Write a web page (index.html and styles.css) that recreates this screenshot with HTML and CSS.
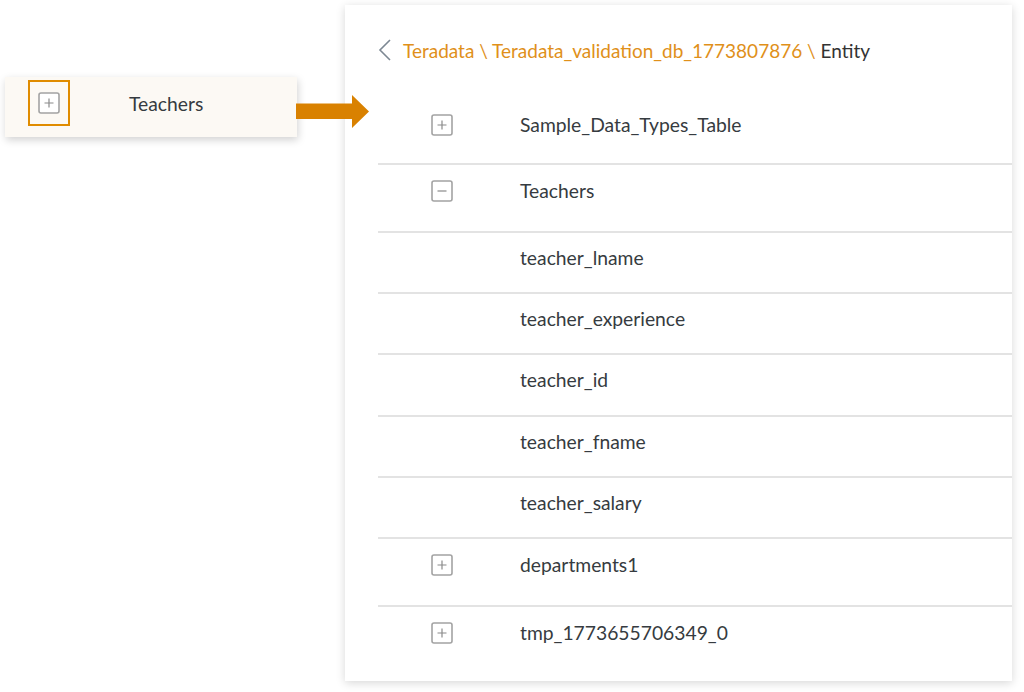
FILE: index.html
```html
<!DOCTYPE html>
<html>
<head>
<meta charset="utf-8">
<link rel="stylesheet" href="styles.css">
</head>
<body>
<div class="stage">
  <div class="card">
    <div class="focus">
      <svg class="tg" width="22" height="22" viewBox="0 0 22 22"><rect x="1" y="1" width="20" height="20" rx="2" fill="#fff" stroke="#a3a3a3" stroke-width="1.6"/><path d="M6.5 11h9M11 6.5v9" stroke="#8a8a8a" stroke-width="1.2"/></svg>
    </div>
    <span class="card-label">Teachers</span>
  </div>

  <div class="panel">
    <div class="crumbs">
      <svg class="back" width="14" height="22" viewBox="0 0 14 22"><path d="M12 1L2 11l10 10" fill="none" stroke="#7d8893" stroke-width="1.6"/></svg>
      <span class="link">Teradata \ Teradata_validation_db_1773807876 \ </span><span class="cur">Entity</span>
    </div>
    <div class="list">
      <div class="row node first">
        <svg class="tg" width="22" height="22" viewBox="0 0 22 22"><rect x="1" y="1" width="20" height="20" rx="2" fill="#fff" stroke="#a3a3a3" stroke-width="1.6"/><path d="M6.5 11h9M11 6.5v9" stroke="#8a8a8a" stroke-width="1.2"/></svg>
        <span class="label">Sample_Data_Types_Table</span>
      </div>
      <div class="row node">
        <svg class="tg" width="22" height="22" viewBox="0 0 22 22"><rect x="1" y="1" width="20" height="20" rx="2" fill="#fff" stroke="#a3a3a3" stroke-width="1.6"/><path d="M6.5 11h9" stroke="#8a8a8a" stroke-width="1.2"/></svg>
        <span class="label">Teachers</span>
      </div>
      <div class="row leaf"><span class="label">teacher_lname</span></div>
      <div class="row leaf"><span class="label">teacher_experience</span></div>
      <div class="row leaf"><span class="label">teacher_id</span></div>
      <div class="row leaf"><span class="label">teacher_fname</span></div>
      <div class="row leaf"><span class="label">teacher_salary</span></div>
      <div class="row node">
        <svg class="tg" width="22" height="22" viewBox="0 0 22 22"><rect x="1" y="1" width="20" height="20" rx="2" fill="#fff" stroke="#a3a3a3" stroke-width="1.6"/><path d="M6.5 11h9M11 6.5v9" stroke="#8a8a8a" stroke-width="1.2"/></svg>
        <span class="label">departments1</span>
      </div>
      <div class="row node last">
        <svg class="tg" width="22" height="22" viewBox="0 0 22 22"><rect x="1" y="1" width="20" height="20" rx="2" fill="#fff" stroke="#a3a3a3" stroke-width="1.6"/><path d="M6.5 11h9M11 6.5v9" stroke="#8a8a8a" stroke-width="1.2"/></svg>
        <span class="label">tmp_1773655706349_0</span>
      </div>
    </div>
  </div>

  <svg class="arrow" width="74" height="33" viewBox="0 0 74 33"><path d="M0 8.5h56V0l17 16.5L56 33v-9H0z" fill="#d98100"/></svg>
</div>
</body>
</html>
```
FILE: styles.css
```css
* { box-sizing: border-box; }
html, body { margin: 0; padding: 0; background: #fff; }
body {
  font-family: Lato, "Open Sans", "Liberation Sans", sans-serif;
  color: #363b40;
  width: 1024px;
  height: 692px;
  overflow: hidden;
}
.stage {
  position: relative;
  display: flex;
  align-items: flex-start;
  padding: 5px 0 0 5px;
}
.card {
  margin-top: 72px;
  width: 292px;
  height: 60px;
  background: #fcf9f4;
  box-shadow: 1px 3px 8px rgba(0,0,0,0.18);
  display: flex;
  align-items: center;
  padding-left: 23px;
}
.focus {
  width: 42px;
  height: 46px;
  border: 2px solid #e08c00;
  display: flex;
  align-items: center;
  justify-content: center;
  margin-top: -8px;
}
.card-label {
  margin-left: 59px;
  font-size: 19.3px;
  margin-top: -8px;
}
.panel {
  margin-left: 48px;
  width: 667px;
  height: 676px;
  background: #fff;
  box-shadow: 0 2px 9px rgba(0,0,0,0.16);
  padding: 33px 0 0 33px;
}
.crumbs {
  display: flex;
  align-items: center;
  height: 24px;
  font-size: 19px;
  margin-bottom: 37px;
}
.back { margin-right: 11px; }
.link { color: #e0901a; white-space: pre; }
.cur { color: #333; }
.list { display: flex; flex-direction: column; }
.row {
  display: flex;
  align-items: flex-start;
  padding-top: 15px;
  border-bottom: 2px solid #e3e3e3;
  font-size: 19.3px;
  line-height: 22px;
}
.row.node { height: 68px; padding-left: 53px; }
.row.node.first { height: 66px; }
.row.node.last { border-bottom: none; }
.row.leaf { height: 61.2px; padding-left: 142px; padding-top: 14px; }
.row.node .label { margin-left: 67px; }
.label { color: #363b40; }
.tg { display: block; flex: none; }
.arrow {
  position: absolute;
  left: 296px;
  top: 95px;
}
```
